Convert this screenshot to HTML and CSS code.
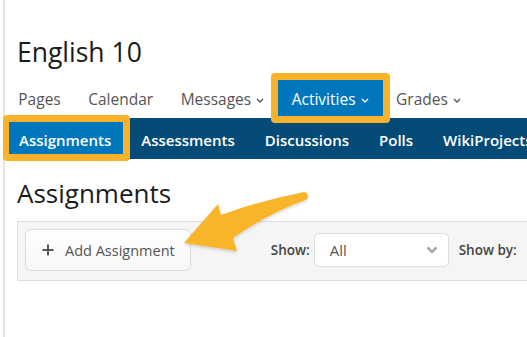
FILE: index.html
```html
<!DOCTYPE html>
<html lang="en">
<head>
<meta charset="utf-8">
<title>English 10 - Assignments</title>
<link rel="stylesheet" href="styles.css">
</head>
<body>
<div class="page">
  <h1 class="course-title">English 10</h1>
  <nav class="main-nav">
    <a class="main-item">Pages</a>
    <a class="main-item">Calendar</a>
    <a class="main-item">Messages<svg class="chev" width="8" height="5" viewBox="0 0 8 5"><polyline points="1,1 4,4 7,1" fill="none" stroke="currentColor" stroke-width="1.4"/></svg></a>
    <a class="main-item active highlight">Activities<svg class="chev" width="8" height="5" viewBox="0 0 8 5"><polyline points="1,1 4,4 7,1" fill="none" stroke="currentColor" stroke-width="1.4"/></svg></a>
    <a class="main-item">Grades<svg class="chev" width="8" height="5" viewBox="0 0 8 5"><polyline points="1,1 4,4 7,1" fill="none" stroke="currentColor" stroke-width="1.4"/></svg></a>
  </nav>
  <nav class="sub-nav">
    <a class="sub-item active highlight">Assignments</a>
    <a class="sub-item">Assessments</a>
    <a class="sub-item">Discussions</a>
    <a class="sub-item">Polls</a>
    <a class="sub-item">WikiProjects</a>
  </nav>
  <h2 class="page-title">Assignments</h2>
  <div class="toolbar">
    <button class="add-btn"><svg class="plus" width="12" height="12" viewBox="0 0 12 12"><path d="M6 0.5V11.5M0.5 6H11.5" stroke="#555" stroke-width="2"/></svg><span>Add Assignment</span></button>
    <label class="show-label">Show:</label>
    <div class="select"><span>All</span><svg class="sel-chev" width="12" height="8" viewBox="0 0 12 8"><polyline points="1.5,1.5 6,6 10.5,1.5" fill="none" stroke="#aaa" stroke-width="2.6"/></svg></div>
    <label class="show-label by">Show by:</label>
  </div>
  <svg class="arrow" width="527" height="337" viewBox="0 0 527 337">
    <defs>
      <filter id="sh" x="-20%" y="-20%" width="140%" height="160%">
        <feDropShadow dx="0" dy="1.5" stdDeviation="1.5" flood-color="#000" flood-opacity="0.18"/>
      </filter>
    </defs>
    <path filter="url(#sh)" fill="#F9B52A" d="M184 243 L218 204 L221 215 Q262 200 302 192.5 A3.8 3.8 0 0 1 305.5 200 Q269 213 233 238 L237 251 Z"/>
  </svg>
</div>
</body>
</html>
```

FILE: styles.css
```css
html, body {
  margin: 0;
  padding: 0;
  background: #fff;
  overflow: hidden;
}
body {
  font-family: "Open Sans", "Liberation Sans", sans-serif;
  width: 527px;
  height: 337px;
}
.page {
  position: relative;
  margin-left: 3px;
  border-left: 2px solid #e6e6e6;
  height: 337px;
}
.course-title {
  margin: 0;
  padding: 34px 0 0 12px;
  font-size: 26.5px;
  font-weight: 400;
  line-height: 36px;
  color: #1b1b1b;
}
.main-nav {
  display: flex;
  margin-top: 10px;
  white-space: nowrap;
}
.main-item {
  position: relative;
  display: flex;
  align-items: baseline;
  padding: 9px 14.2px 7px 13.3px;
  font-size: 15.5px;
  line-height: 20px;
  color: #555;
}
.main-item .chev {
  margin-left: 5px;
  position: relative;
  top: -2px;
}
.main-item.active {
  background: #0077bd;
  color: #fff;
}
.sub-nav {
  display: flex;
  margin-top: 2px;
  background: #054b77;
  white-space: nowrap;
  margin-right: -200px;
}
.sub-item {
  position: relative;
  padding: 12px 16px 9px 14px;
  font-size: 15px;
  line-height: 20px;
  font-weight: 600;
  color: #fff;
}
.sub-item.active {
  background: #0077bd;
}
.highlight::after {
  content: "";
  position: absolute;
  inset: -7px;
  border: 7px solid #f8b32a;
  border-radius: 4px;
  z-index: 2;
}
.sub-item.highlight::after {
  inset: -3px -3px -2px -2px;
  border-width: 7px 7px 7px 6px;
}
.page-title {
  margin: 16px 0 0 12px;
  font-size: 26px;
  font-weight: 400;
  line-height: 36px;
  color: #1b1b1b;
}
.toolbar {
  display: flex;
  align-items: center;
  margin: 10px -40px 0 12px;
  padding: 7px 7px 9px;
  background: #f5f5f5;
  border: 1px solid #dedede;
  white-space: nowrap;
}
.add-btn {
  display: flex;
  align-items: center;
  height: 42px;
  padding: 0 15px 0 16px;
  border: 1px solid #dcdcdc;
  border-radius: 6px;
  background: linear-gradient(#ffffff, #f7f7f7);
  font-family: inherit;
  font-size: 14.5px;
  color: #555;
}
.add-btn .plus {
  margin-right: 11px;
}
.show-label {
  margin-left: 80px;
  font-size: 13.5px;
  font-weight: 600;
  color: #444;
}
.show-label.by {
  margin-left: 10px;
}
.select {
  display: flex;
  align-items: center;
  justify-content: space-between;
  box-sizing: border-box;
  width: 135px;
  height: 34px;
  margin-left: 4px;
  padding: 0 10px 0 15px;
  background: #fff;
  border: 1px solid #dcdcdc;
  border-radius: 5px;
  font-size: 15px;
  color: #555;
}
.arrow {
  position: absolute;
  top: 0;
  left: -5px;
  pointer-events: none;
  z-index: 3;
}
```
